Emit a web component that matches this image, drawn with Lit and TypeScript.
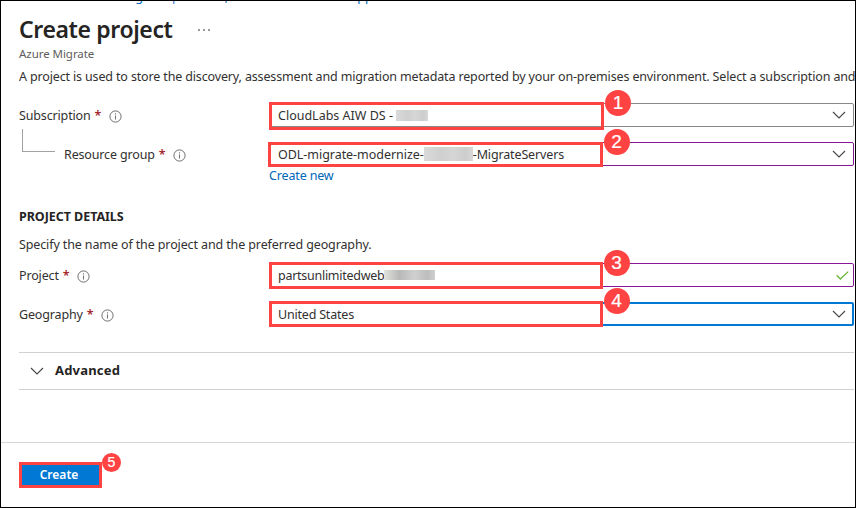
import { LitElement, html, css, svg } from "lit";
import { customElement } from "lit/decorators.js";

const chevron = html`<svg class="chev" viewBox="0 0 14 8" width="14" height="8">
  ${svg`<path d="M1 1 L7 7 L13 1" fill="none" stroke="#484644" stroke-width="1.1"/>`}
</svg>`;

const check = html`<svg class="check" viewBox="0 0 13 9" width="13" height="9">
  ${svg`<path d="M0.7 4.3 L4.4 8 L12.2 0.6" fill="none" stroke="#6bb536" stroke-width="1.3"/>`}
</svg>`;

const info = html`<svg class="info" viewBox="0 0 13 13" width="13" height="13">
  ${svg`<circle cx="6.5" cy="6.5" r="5.6" fill="none" stroke="#6e6c6a" stroke-width="1"/>
  <path d="M6.5 5.6 V9.6 M6.5 3.3 V4.6" fill="none" stroke="#7a7876" stroke-width="1.1"/>`}
</svg>`;

@customElement("app-root")
export class AppRoot extends LitElement {
  static styles = css`
    :host {
      display: block;
      width: 856px;
      height: 508px;
      font-family: "Noto Sans", "Open Sans", sans-serif;
      font-size: 12.5px;
      line-height: 18px;
      color: #323130;
    }
    * { box-sizing: border-box; }
    .page {
      width: 856px;
      height: 508px;
      border: 1px solid #000;
      background: #fff;
      overflow: hidden;
      display: flex;
      flex-direction: column;
      white-space: nowrap;
    }
    .crumbs {
      height: 4px;
      padding-left: 18px;
      display: flex;
      align-items: flex-end;
      overflow: hidden;
      color: #0064bf;
      letter-spacing: 0.1px;
      flex: none;
    }
    .crumbs span { display: block; margin-bottom: -1px; }
    .crumbs .sep { color: #605e5c; width: 28px; text-align: center; }
    .head { display: flex; height: 42px; padding-left: 18px; flex: none; }
    h1 {
      margin: 7px 0 0;
      width: 179px;
      font-size: 23px;
      line-height: 34px;
      font-weight: 600;
      letter-spacing: -0.38px;
      color: #252423;
    }
    .more { display: flex; gap: 3px; padding-top: 24px; }
    .more i { width: 2px; height: 2px; background: #797775; border-radius: 1px; }
    .sub {
      padding-left: 18px;
      height: 22px;
      line-height: 14px;
      font-size: 11.5px;
      letter-spacing: -0.05px;
      color: #605e5c;
      flex: none;
    }
    .desc { padding-left: 18px; height: 34px; line-height: 15px; letter-spacing: -0.145px; flex: none; }
    .row {
      display: grid;
      grid-template-columns: 250px 585px;
      padding-left: 18px;
      height: 24px;
      flex: none;
    }
    .label { display: flex; align-items: center; letter-spacing: -0.15px; height: 24px; padding-top: 2px; }
    .label b { color: #a4262c; font-weight: 600; font-size: 12.5px; margin-left: 4px; }
    .label .info { margin-left: 8px; }
    .tree {
      width: 33px;
      height: 23px;
      margin: -29px 9px 0 3px;
      border-left: 1px solid #a3a1a0;
      border-bottom: 1px solid #a3a1a0;
    }
    .field {
      position: relative;
      height: 24px;
      border: 1px solid #8a8886;
      border-radius: 2px;
      display: flex;
      align-items: center;
      padding: 0 8px;
    }
    .purple { border-color: #881798; }
    .blue { border: 2px solid #0078d4; height: 24px; padding: 0 7px; }
    .value { letter-spacing: -0.1px; padding-top: 2px; }
    .v1 { letter-spacing: 0; }
    .v2 { letter-spacing: -0.04px; }
    .v3 { letter-spacing: -0.27px; }
    .v4 { letter-spacing: -0.2px; }
    .v2b { letter-spacing: -0.14px; }
    .blur { height: 11px; background: linear-gradient(90deg, #dadada, #cfcfcf 35%, #d6d6d6 60%, #cdcdcd 85%, #d8d8d8); }
    .b1 { width: 32px; margin-left: 3px; }
    .b2 { width: 49px; height: 14px; }
    .b3 { width: 51px; height: 10px; background: linear-gradient(90deg, #e2e2de, #b9b9b9 30%, #d0d0d0 60%, #bdbdbd 85%, #cfcfcf); }
    .chev { margin-left: auto; margin-right: -1px; flex: none; }
    .check { margin-left: auto; margin-right: -4px; flex: none; }
    .mark { position: absolute; border: 3px solid #ff4343; }
    .m1 { left: -1px; top: -2px; width: 335px; height: 28px; }
    .m2 { left: -2px; top: -1px; width: 335px; height: 25px; }
    .m3 { left: -1px; top: -2px; width: 334px; height: 27px; }
    .m4 { left: -2px; top: -3px; width: 334px; height: 26px; }
    .badge {
      position: absolute;
      width: 26px;
      height: 26px;
      border-radius: 50%;
      background: #ff4343;
      color: #fff;
      font: 19px/26px "Liberation Sans", Arial, sans-serif;
      letter-spacing: 0;
      text-align: center;
      -webkit-text-stroke: 0.2px #fff;
    }
    .n1 { left: 335px; top: -14px; }
    .n2, .n3 { left: 333.5px; top: -14px; }
    .n4 { left: 332.5px; top: -16px; }
    .gap { height: 15px; flex: none; }
    .link { padding: 1px 0 0 268px; height: 41px; color: #0067b8; letter-spacing: -0.15px; flex: none; }
    h2 { margin: 0; padding-left: 18px; height: 29px; font-size: 12.5px; line-height: 20px; font-weight: 700; letter-spacing: -0.05px; color: #252423; flex: none; }
    .para { padding-left: 18px; height: 27px; flex: none; letter-spacing: -0.12px; }
    .adv {
      margin: 26px 1px 0 18px;
      height: 38px;
      border-top: 1px solid #d2d0ce;
      border-bottom: 1px solid #d2d0ce;
      display: flex;
      align-items: center;
      padding-left: 11px;
      font-size: 13px;
      font-weight: 700;
      letter-spacing: 0.2px;
      color: #252423;
      flex: none;
    }
    .adv span { padding-bottom: 2px; }
    .adv .chev { margin: 0 11px 0 0; }
    .foot { margin-top: 52px; border-top: 1px solid #d6d6d6; padding: 19px 0 0 18px; }
    .btn {
      position: relative;
      width: 83px;
      height: 26px;
      border: 3px solid #ff4343;
      background: #0078d4;
      color: #fff;
      font: 600 12px/20px "Noto Sans", sans-serif;
      padding: 0 3px 0 0;
      text-align: center;
    }
    .n5 { width: 19px; height: 19px; left: 80px; top: -12px; font-size: 14px; line-height: 19px; }
  `;

  render() {
    return html`<div class="page">
      <div class="crumbs">
        <span>Home</span><span class="sep">&gt;</span><span>Azure Migrate | Servers, databases and web apps</span><span class="sep">&gt;</span>
      </div>
      <div class="head"><h1>Create project</h1><div class="more"><i></i><i></i><i></i></div></div>
      <div class="sub">Azure Migrate</div>
      <div class="desc">A project is used to store the discovery, assessment and migration metadata reported by your on-premises environment. Select a subscription and</div>
      <div class="row">
        <div class="label">Subscription<b>*</b>${info}</div>
        <div class="field"><span class="value v1">CloudLabs AIW DS -</span><i class="blur b1"></i>${chevron}
          <div class="mark m1"></div><div class="badge n1">1</div></div>
      </div>
      <div class="gap"></div>
      <div class="row">
        <div class="label"><i class="tree"></i>Resource group<b>*</b>${info}</div>
        <div class="field purple"><span class="value v2">ODL-migrate-modernize-</span><i class="blur b2"></i><span class="value v2b">-MigrateServers</span>${chevron}
          <div class="mark m2"></div><div class="badge n2">2</div></div>
      </div>
      <div class="link">Create new</div>
      <h2>PROJECT DETAILS</h2>
      <div class="para">Specify the name of the project and the preferred geography.</div>
      <div class="row">
        <div class="label">Project<b>*</b>${info}</div>
        <div class="field purple"><span class="value v3">partsunlimitedweb</span><i class="blur b3"></i>${check}
          <div class="mark m3"></div><div class="badge n3">3</div></div>
      </div>
      <div class="gap"></div>
      <div class="row">
        <div class="label">Geography<b>*</b>${info}</div>
        <div class="field blue"><span class="value v4">United States</span>${chevron}
          <div class="mark m4"></div><div class="badge n4">4</div></div>
      </div>
      <div class="adv">${chevron}<span>Advanced</span></div>
      <div class="foot"><div class="btn">Create<div class="badge n5">5</div></div></div>
    </div>`;
  }
}
